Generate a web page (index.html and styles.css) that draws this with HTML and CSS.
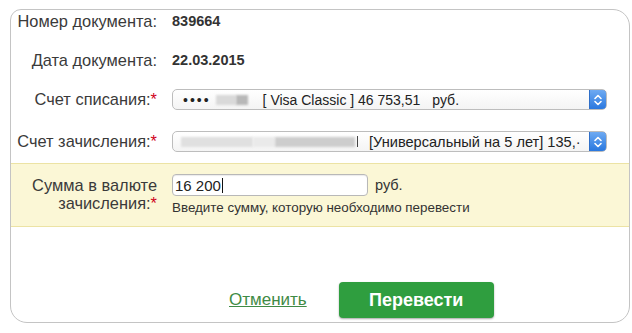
FILE: index.html
```html
<!DOCTYPE html>
<html lang="ru">
<head>
<meta charset="utf-8">
<link rel="stylesheet" href="styles.css">
</head>
<body>
<div class="card">
  <div class="row r1">
    <div class="label">Номер документа:</div>
    <div class="value">839664</div>
  </div>
  <div class="row r2">
    <div class="label">Дата документа:</div>
    <div class="value">22.03.2015</div>
  </div>
  <div class="row r3">
    <div class="label">Счет списания:<span class="req">*</span></div>
    <div class="select">
      <div class="sel-text">
        <span class="dots">••••</span>
        <span class="blur b1"></span><span class="blur b2"></span>
        <span class="t1">[ Visa Classic ] 46 753,51</span>
        <span class="t2">руб.</span>
      </div>
      <div class="stepper">
        <svg width="10" height="14" viewBox="0 0 10 14"><path d="M2 5.5 L5 2.5 L8 5.5 M2 8.5 L5 11.5 L8 8.5" fill="none" stroke="#fff" stroke-width="1.6" stroke-linecap="round" stroke-linejoin="round"/></svg>
      </div>
    </div>
  </div>
  <div class="row r4">
    <div class="label">Счет зачисления:<span class="req">*</span></div>
    <div class="select">
      <div class="sel-text">
        <span class="blur b3"></span><span class="blur b4"></span><span class="blur b5"></span>
        <span class="bar"></span>
        <span class="t3">[Универсальный на 5 лет] 135,·</span>
      </div>
      <div class="stepper">
        <svg width="10" height="14" viewBox="0 0 10 14"><path d="M2 5.5 L5 2.5 L8 5.5 M2 8.5 L5 11.5 L8 8.5" fill="none" stroke="#fff" stroke-width="1.6" stroke-linecap="round" stroke-linejoin="round"/></svg>
      </div>
    </div>
  </div>
  <div class="band">
    <div class="label two">Сумма в валюте<br>зачисления:<span class="req">*</span></div>
    <div class="amount">
      <div class="input-line">
        <div class="input">16 200<span class="caret"></span></div>
        <span class="cur">руб.</span>
      </div>
      <div class="hint">Введите сумму, которую необходимо перевести</div>
    </div>
  </div>
  <div class="actions">
    <a class="cancel" href="#">Отменить</a>
    <button class="submit">Перевести</button>
  </div>
</div>
</body>
</html>
```

FILE: styles.css
```css
* { box-sizing: border-box; }
html, body { margin: 0; padding: 0; background: #fff; }
body {
  font-family: "Liberation Sans", Arial, Helvetica, sans-serif;
  color: #333;
}
.card {
  margin: 9px 0 0 10px;
  width: 620px;
  height: 314px;
  border: 1px solid #c4c4c4;
  border-radius: 11px 17px 17px 17px;
  background: #fff;
  padding-top: 2px;
  overflow: hidden;
}
.row {
  display: flex;
  align-items: center;
}
.label {
  width: 146px;
  text-align: right;
  font-size: 16.4px;
  line-height: 18px;
  color: #3a3a3a;
  flex: none;
  white-space: nowrap;
}
.req { color: #d0021b; }
.value {
  margin-left: 15px;
  font-size: 14.5px;
  font-weight: bold;
  color: #333;
  line-height: 18px;
}
.r1 { height: 18px; }
.r2 { height: 18px; margin-top: 21px; }
.r3 { height: 21px; margin-top: 20px; }
.r4 { height: 21px; margin-top: 21px; }
.r3 .label, .r4 .label { position: relative; top: -1px; }
.select {
  margin-left: 15px;
  width: 435px;
  height: 21px;
  border: 1px solid #bdbdbd;
  border-radius: 5px;
  background: linear-gradient(#ffffff, #f4f4f4);
  display: flex;
  align-items: center;
  overflow: hidden;
}
.sel-text {
  flex: 1;
  display: flex;
  align-items: center;
  font-size: 14px;
  color: #222;
  white-space: nowrap;
  overflow: hidden;
  height: 100%;
}
.dots { margin-left: 10px; font-size: 14px; letter-spacing: 2px; color: #222; }
.blur { display: inline-block; height: 10px; filter: blur(1.2px); }
.b1 { width: 20px; margin-left: 5px; background: #d9d9d9; }
.b2 { width: 12px; background: #b8b8b8; }
.t1 { margin-left: 15px; }
.t2 { margin-left: 12px; }
.b3 { width: 72px; margin-left: 8px; background: #e0e0e0; }
.b4 { width: 22px; background: #eaeaea; }
.b5 { width: 80px; background: #cdcdcd; }
.bar { display: inline-block; width: 1px; height: 11px; background: #444; margin-left: 2px; }
.t3 { margin-left: 11px; font-size: 14.6px; }
.stepper {
  flex: none;
  width: 18px;
  height: 21px;
  margin: -1px -1px -1px 0;
  border-radius: 0 5px 5px 0;
  background: linear-gradient(#6eaaf2, #2a78df);
  border: 1px solid #2f6fc8;
  display: flex;
  align-items: center;
  justify-content: center;
}
.band {
  margin-top: 11px;
  height: 64px;
  background: #fbf7d6;
  border-top: 1px solid #ece3a4;
  border-bottom: 1px solid #ece3a4;
  display: flex;
  align-items: flex-start;
  padding-top: 10px;
}
.label.two { margin-top: 2px; }
.amount { margin-left: 15px; }
.input-line { display: flex; align-items: center; }
.input {
  width: 196px;
  height: 22px;
  border: 1px solid #b8b8b8;
  border-radius: 4px;
  background: #fff;
  font-size: 15px;
  color: #222;
  padding-left: 2px;
  display: flex;
  align-items: center;
  box-shadow: inset 0 1px 1px rgba(0,0,0,0.08);
}
.caret { display: inline-block; width: 1px; height: 15px; background: #111; margin-left: 1px; }
.cur { margin-left: 7px; font-size: 14.5px; color: #333; }
.hint { margin-top: 5px; font-size: 13.4px; color: #333; line-height: 14px; }
.actions {
  display: flex;
  align-items: center;
  margin-top: 55px;
  padding-left: 218px;
}
.cancel {
  color: #3f8b45;
  font-size: 17px;
  text-decoration: underline;
}
.submit {
  margin-left: 32px;
  width: 155px;
  height: 36px;
  border: none;
  border-radius: 4px;
  background: #2f9e3f;
  color: #fff;
  font-family: "Liberation Sans", Arial, sans-serif;
  font-weight: bold;
  font-size: 18px;
  box-shadow: 0 1px 2px rgba(0,0,0,0.35);
}
```
